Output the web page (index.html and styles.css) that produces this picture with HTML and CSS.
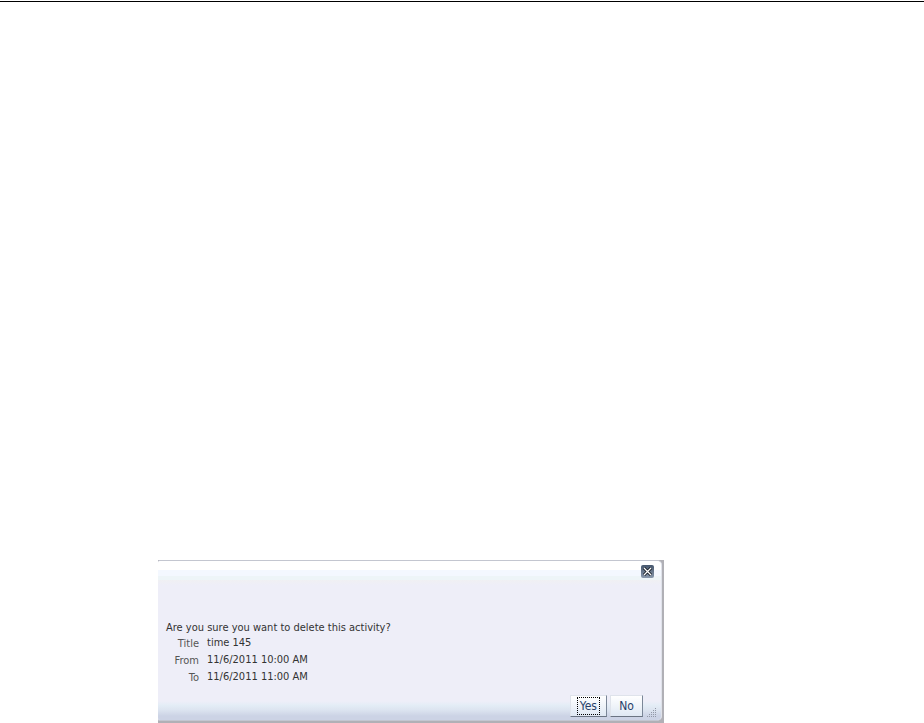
FILE: index.html
```
<!DOCTYPE html>
<html lang="en">
<head>
  <meta charset="UTF-8">
  <meta name="viewport" content="width=device-width, initial-scale=1.0">
  <title>Delete Activity</title>
  <link rel="stylesheet" href="styles.css">
</head>
<body>
  <hr class="page-rule">
  <main class="page">
    <div class="dialog-frame">
      <div class="dialog" role="dialog" aria-labelledby="question">
        <div class="dialog-header">
          <button class="close" type="button" aria-label="Close">
            <svg width="13" height="13" viewBox="0 0 13 13">
              <path d="M3 3l7 7M10 3l-7 7" fill="none" stroke="#10151c" stroke-width="3"/>
              <path d="M3 3l7 7M10 3l-7 7" fill="none" stroke="#fff" stroke-width="1.3"/>
            </svg>
          </button>
        </div>
        <div class="dialog-body">
          <p class="question" id="question">Are you sure you want to delete this activity?</p>
          <dl class="details">
            <dt>Title</dt>
            <dd>time 145</dd>
            <dt>From</dt>
            <dd>11/6/2011 10:00 AM</dd>
            <dt>To</dt>
            <dd>11/6/2011 11:00 AM</dd>
          </dl>
        </div>
        <div class="dialog-footer">
          <button class="btn" type="button"><span class="focus">Yes</span></button>
          <button class="btn" type="button"><span>No</span></button>
          <svg class="grip" width="11" height="11" viewBox="0 0 11 11" shape-rendering="crispEdges">
            <path d="M9 1h1v1h-1zM7 3h1v1h-1zM9 3h1v1h-1zM5 5h1v1h-1zM7 5h1v1h-1zM9 5h1v1h-1zM3 7h1v1h-1zM5 7h1v1h-1zM7 7h1v1h-1zM9 7h1v1h-1zM1 9h1v1h-1zM3 9h1v1h-1zM5 9h1v1h-1zM7 9h1v1h-1zM9 9h1v1h-1z" fill="#9298a6"/>
          </svg>
        </div>
      </div>
    </div>
  </main>
</body>
</html>
```
FILE: styles.css
```
* {
  box-sizing: border-box;
}

body {
  display: flex;
  flex-direction: column;
  min-height: 100vh;
  margin: 0;
  background: #fff;
  color: #333;
  font-family: "DejaVu Sans Condensed", "Noto Sans", sans-serif;
  font-size: 11px;
  line-height: 14px;
}

.page-rule {
  width: 100%;
  height: 1px;
  margin: 1px 0 0;
  border: none;
  background: #000;
}

.page {
  display: grid;
  flex: 1;
  grid-template-columns: 158fr 506fr 260fr;
  align-items: end;
}

.dialog-frame {
  grid-column: 2;
  padding: 0 2px 2px 0;
  background: #b0b0b6;
}

.dialog {
  border-top: 1px solid #c3c6d0;
  border-right: 1px solid #dfe2ea;
  border-bottom: 1px solid #c3c6d0;
  border-radius: 2px 5px 5px 2px;
  background: #eeeef8;
}

/* Header */
.dialog-header {
  display: flex;
  justify-content: flex-end;
  height: 24px;
  padding: 4px 7px 0 0;
  border-radius: 2px 4px 0 0;
  background: linear-gradient(#fff 9px, #f4f8ff 9px, #f4f8ff 15px, #eef5f8 15px, #eef5f8 19px, #f0f0f3 19px, #eeeef8 24px);
}

.close {
  width: 13px;
  height: 13px;
  padding: 0;
  border: none;
  border-radius: 2px;
  background: linear-gradient(#46566c, #8998ac);
  cursor: pointer;
}

.close svg {
  display: block;
}

/* Message */
.dialog-body {
  padding: 36px 8px 10px;
}

.question {
  margin: 0 0 1px;
}

.details {
  display: grid;
  grid-template-columns: 33px 1fr;
  column-gap: 8px;
  row-gap: 2px;
  margin: 0;
}

.details dt {
  padding-top: 1px;
  color: #555;
  text-align: right;
}

.details dd {
  margin: 0;
}

/* Footer */
.dialog-footer {
  display: flex;
  justify-content: flex-end;
  align-items: flex-start;
  gap: 3px;
  height: 25px;
  padding-right: 4px;
  background: linear-gradient(#eeeef8 6px, #e4edf6 10px, #dce4f0 15px, #ccd3e5 21px);
  border-radius: 0 0 4px 2px;
}

.btn {
  display: flex;
  justify-content: center;
  align-items: center;
  min-width: 33px;
  height: 22px;
  padding: 0 7px;
  border: 1px solid #dfe3eb;
  border-right-color: #7b8798;
  border-bottom-color: #6b7482;
  background: linear-gradient(#fff, #dfe8f3);
  color: #274069;
  font: inherit;
  font-size: 12px;
  cursor: pointer;
}

.focus {
  padding: 1px 2px;
  outline: 1px dotted #000;
}

.grip {
  align-self: flex-end;
  margin-bottom: 2px;
}
```
